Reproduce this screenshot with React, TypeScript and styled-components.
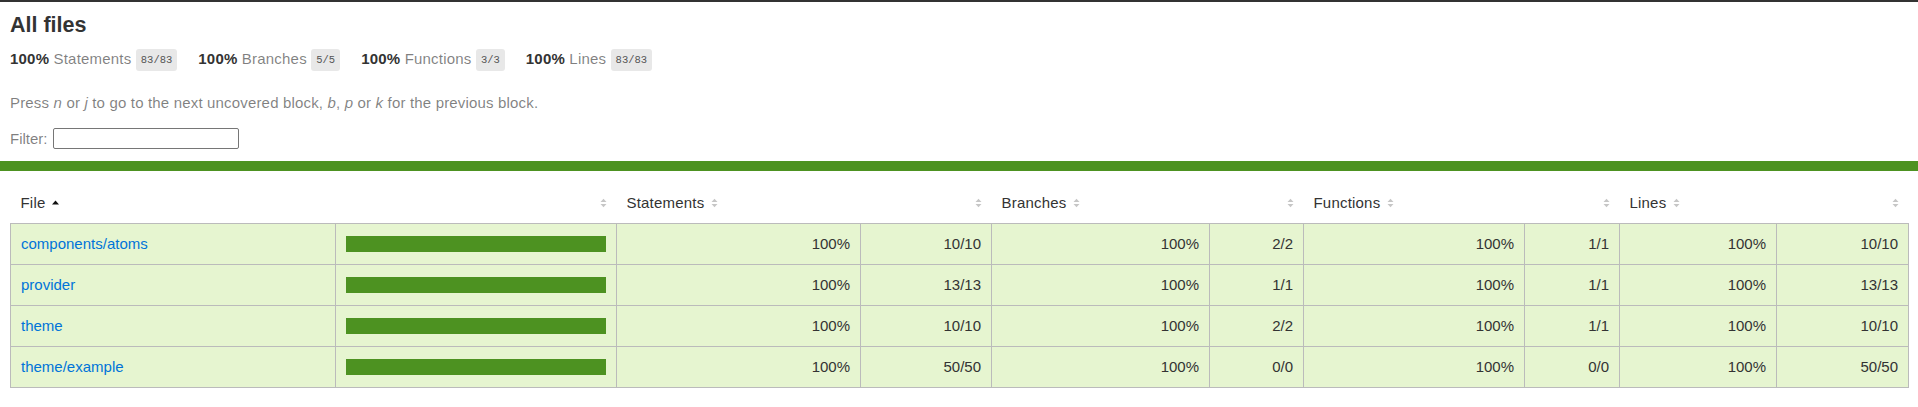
import React from 'react';
import styled, { createGlobalStyle } from 'styled-components';

const Global = createGlobalStyle`
  html, body { margin: 0; padding: 0; background: #fff; }
  body {
    font-family: "Liberation Sans", Arial, sans-serif;
    font-size: 15px;
    color: #333;
  }
  *, *::before, *::after { box-sizing: border-box; }
`;

const Page = styled.div`
  border-top: 2px solid #333;
`;

const Header = styled.div`
  padding: 12px 10px 10px;
`;

const Title = styled.h1`
  margin: 0;
  font-size: 21.5px;
  line-height: 23px;
  font-weight: bold;
`;

const Stats = styled.div`
  display: flex;
`;

const Stat = styled.div`
  padding: 12px 21px 10px 0;
  line-height: 16px;
  letter-spacing: 0.2px;
  white-space: nowrap;
`;

const Strong = styled.span`
  font-weight: bold;
`;

const Quiet = styled.span`
  color: rgba(0, 0, 0, 0.5);
`;

const Fraction = styled.span`
  display: inline-block;
  vertical-align: middle;
  font-family: "Liberation Mono", monospace;
  font-size: 10.5px;
  line-height: 14px;
  letter-spacing: 0;
  color: #555;
  background: #e8e8e8;
  padding: 4px 5px;
  border-radius: 3px;
`;

const Hint = styled.p`
  margin: 14px 0;
  line-height: 16px;
  letter-spacing: 0.17px;
  color: rgba(0, 0, 0, 0.5);
`;

const FilterRow = styled.div`
  display: flex;
  align-items: center;
  gap: 5px;
  height: 26px;
  color: rgba(0, 0, 0, 0.5);
`;

const Search = styled.input`
  width: 186px;
  height: 21px;
  border: 1px solid #767676;
  border-radius: 2px;
  padding: 1px 2px;
  font-size: 13px;
  outline: none;
`;

const StatusLine = styled.div<{ $level: 'high' | 'medium' | 'low' }>`
  height: 10px;
  background: ${(p) => (p.$level === 'high' ? 'rgb(77,146,33)' : p.$level === 'medium' ? '#f9cd0b' : '#C21F39')};
`;

const TableWrap = styled.div`
  padding: 10px;
`;

const Table = styled.table`
  width: 100%;
  border-collapse: collapse;
  table-layout: fixed;
`;

const HeadRow = styled.tr`
  border-bottom: 1px solid #bbb;
`;

const Th = styled.th<{ $right?: boolean }>`
  height: 42px;
  padding: 14px 10px 0;
  vertical-align: top;
  text-align: ${(p) => (p.$right ? 'right' : 'left')};
  font-weight: normal;
  white-space: nowrap;
  line-height: 16px;
  letter-spacing: 0.2px;
`;

const Body = styled.tbody`
  border: 1px solid #bbb;
`;

const Row = styled.tr`
  border-bottom: 1px solid #bbb;
`;

const Td = styled.td<{ $right?: boolean }>`
  height: 41px;
  padding: 0 10px;
  vertical-align: middle;
  text-align: ${(p) => (p.$right ? 'right' : 'left')};
  background: rgb(230, 245, 208);
  border-right: 1px solid #bbb;
  white-space: nowrap;
  line-height: 16px;
  &:last-child { border-right: none; }
`;

const FileLink = styled.a`
  color: #0074d9;
  text-decoration: none;
`;

const Chart = styled.div`
  line-height: 0;
  height: 16px;
  display: flex;
`;

const CoverFill = styled.div`
  height: 16px;
  background: rgb(77, 146, 33);
`;

const SorterSvg = styled.svg`
  margin-left: 7px;
  width: 7px;
  height: 10px;
  vertical-align: baseline;
`;

function Sorter({ sorted }: { sorted?: boolean }) {
  return (
    <SorterSvg viewBox="0 0 7 10">
      {sorted ? (
        <path d="M0 6.6 L3.5 2.6 L7 6.6 Z" fill="#111" />
      ) : (
        <>
          <path d="M0.5 4 L3.5 0.8 L6.5 4 Z" fill="#c6c6c6" />
          <path d="M0.5 6 L6.5 6 L3.5 9.2 Z" fill="#c6c6c6" />
        </>
      )}
    </SorterSvg>
  );
}

const summary = [
  { label: 'Statements', value: '83/83' },
  { label: 'Branches', value: '5/5' },
  { label: 'Functions', value: '3/3' },
  { label: 'Lines', value: '83/83' },
];

const rows = [
  { file: 'components/atoms', s: '10/10', b: '2/2', f: '1/1', l: '10/10' },
  { file: 'provider', s: '13/13', b: '1/1', f: '1/1', l: '13/13' },
  { file: 'theme', s: '10/10', b: '2/2', f: '1/1', l: '10/10' },
  { file: 'theme/example', s: '50/50', b: '0/0', f: '0/0', l: '50/50' },
];

const widths = [325, 281, 244, 131, 218, 94, 221, 95, 157, 132];

export default function App() {
  return (
    <Page>
      <Global />
      <Header>
        <Title>All files</Title>
        <Stats>
          {summary.map((s) => (
            <Stat key={s.label}>
              <Strong>100% </Strong>
              <Quiet>{s.label}</Quiet>{' '}
              <Fraction>{s.value}</Fraction>
            </Stat>
          ))}
        </Stats>
        <Hint>
          Press <em>n</em> or <em>j</em> to go to the next uncovered block, <em>b</em>, <em>p</em> or{' '}
          <em>k</em> for the previous block.
        </Hint>
        <FilterRow>
          Filter:
          <Search type="search" />
        </FilterRow>
      </Header>
      <StatusLine $level="high" />
      <TableWrap>
        <Table>
          <colgroup>
            {widths.map((w, i) => (
              <col key={i} style={{ width: w }} />
            ))}
          </colgroup>
          <thead>
            <HeadRow>
              <Th>
                File<Sorter sorted />
              </Th>
              <Th $right>
                <Sorter />
              </Th>
              <Th>
                Statements<Sorter />
              </Th>
              <Th $right>
                <Sorter />
              </Th>
              <Th>
                Branches<Sorter />
              </Th>
              <Th $right>
                <Sorter />
              </Th>
              <Th>
                Functions<Sorter />
              </Th>
              <Th $right>
                <Sorter />
              </Th>
              <Th>
                Lines<Sorter />
              </Th>
              <Th $right>
                <Sorter />
              </Th>
            </HeadRow>
          </thead>
          <Body>
            {rows.map((r) => (
              <Row key={r.file}>
                <Td>
                  <FileLink href="#">{r.file}</FileLink>
                </Td>
                <Td>
                  <Chart>
                    <CoverFill style={{ width: '100%' }} />
                  </Chart>
                </Td>
                <Td $right>100%</Td>
                <Td $right>{r.s}</Td>
                <Td $right>100%</Td>
                <Td $right>{r.b}</Td>
                <Td $right>100%</Td>
                <Td $right>{r.f}</Td>
                <Td $right>100%</Td>
                <Td $right>{r.l}</Td>
              </Row>
            ))}
          </Body>
        </Table>
      </TableWrap>
    </Page>
  );
}
